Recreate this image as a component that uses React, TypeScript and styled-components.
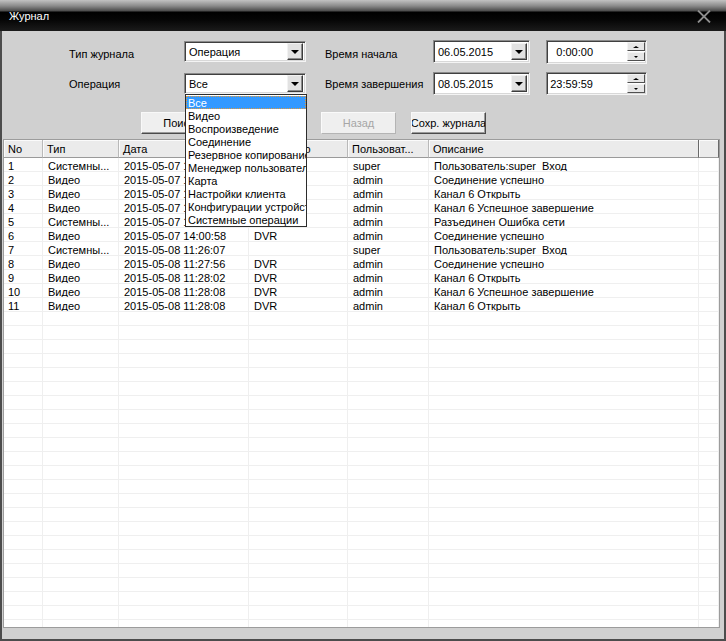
import styled, { createGlobalStyle } from "styled-components";

const GlobalStyle = createGlobalStyle`
  html, body {
    margin: 0;
    padding: 0;
    background: #d0d0d0;
  }
  body {
    font-family: "Liberation Sans", Arial, sans-serif;
    font-size: 11px;
    color: #000;
  }
  * {
    box-sizing: border-box;
  }
`;

const Window = styled.div`
  display: flex;
  flex-direction: column;
  width: 726px;
  height: 641px;
  overflow: hidden;
`;

const TitleBar = styled.div`
  display: flex;
  align-items: center;
  justify-content: space-between;
  flex: none;
  height: 31px;
  padding: 1px 15px 0 9px;
  color: #fff;
  background: linear-gradient(
    to bottom,
    #c2c2c2 0px,
    #8a8a8a 6px,
    #4a4a4a 11px,
    #000 12px,
    #060606 20px,
    #1b1b1b 31px
  );
`;

const Body = styled.div`
  display: flex;
  flex-direction: column;
  flex: 1;
  min-height: 0;
  padding: 9px 4px 11px 1px;
  background: #d0d0d0;
  border: 2px solid #4c4c4c;
  border-top: none;
`;

const FormRow = styled.div<{ $top?: number }>`
  display: flex;
  align-items: center;
  height: 23px;
  margin-top: ${(p) => p.$top ?? 0}px;
  padding-left: 66px;
`;

const Label = styled.div<{ $w: number; $gap?: number; $drop?: number }>`
  width: ${(p) => p.$w}px;
  margin-left: ${(p) => p.$gap ?? 0}px;
  padding-top: ${(p) => p.$drop ?? 0}px;
  white-space: nowrap;
`;

const Field = styled.div<{ $w: number; $h: number; $gap?: number; $pad?: number }>`
  position: relative;
  display: flex;
  align-items: center;
  width: ${(p) => p.$w}px;
  height: ${(p) => p.$h}px;
  margin-left: ${(p) => p.$gap ?? 0}px;
  padding-left: ${(p) => p.$pad ?? 3}px;
  background: #fff;
  border: 1px solid;
  border-color: #8a8a8a #f4f4f4 #f4f4f4 #8a8a8a;
  box-shadow: inset 1px 1px #404040, inset -1px -1px #d8d8d8;
  white-space: nowrap;
`;

const FieldText = styled.span`
  flex: 1;
  padding-left: 1px;
`;

const TimeText = styled.span`
  width: 45px;
  margin-right: auto;
  text-align: right;
`;

const ArrowButton = styled.div`
  display: flex;
  align-items: center;
  justify-content: center;
  width: 16px;
  height: 17px;
  margin-right: 2px;
  background: #e2e2e2;
  border: 1px solid;
  border-color: #f2f2f2 #3c3c3c #3c3c3c #f2f2f2;
  box-shadow: inset -1px -1px #8c8c8c;
`;

const Triangle = styled.span<{ $up?: boolean; $size?: number }>`
  width: 0;
  height: 0;
  border-left: ${(p) => p.$size ?? 4}px solid transparent;
  border-right: ${(p) => p.$size ?? 4}px solid transparent;
  ${(p) =>
    p.$up
      ? `border-bottom: ${(p.$size ?? 4) - 1}px solid #000;`
      : `border-top: ${p.$size ?? 4}px solid #000;`}
`;

const Spin = styled.div`
  display: flex;
  flex-direction: column;
  gap: 1px;
  margin-right: 1px;
`;

const SpinButton = styled.div`
  display: flex;
  align-items: center;
  justify-content: center;
  width: 18px;
  height: 9px;
  background: #e6e6e6;
  border: 1px solid;
  border-color: #f4f4f4 #505050 #505050 #f4f4f4;
`;

const DropList = styled.div`
  position: absolute;
  top: calc(100% + 1px);
  left: 0;
  z-index: 10;
  width: 122px;
  padding-top: 1px;
  background: #fff;
  border: 1px solid #2c2c2c;
  overflow: hidden;
`;

const DropItem = styled.div<{ $active?: boolean }>`
  height: 13px;
  line-height: 14px;
  padding-left: 2px;
  white-space: nowrap;
  color: ${(p) => (p.$active ? "#fff" : "#000")};
  background: ${(p) => (p.$active ? "#3399ff" : "transparent")};
  outline: ${(p) => (p.$active ? "1px dotted #e39a3a" : "none")};
  outline-offset: -1px;
`;

const ButtonRow = styled.div`
  display: flex;
  gap: 15px;
  margin-top: 17px;
  padding-left: 138px;
`;

const Button = styled.div<{ $disabled?: boolean }>`
  display: flex;
  align-items: center;
  justify-content: center;
  width: 75px;
  height: 22px;
  overflow: hidden;
  white-space: nowrap;
  color: ${(p) => (p.$disabled ? "#a6a6a6" : "#000")};
  background: #efefef;
  border: 1px solid;
  border-color: ${(p) =>
    p.$disabled ? "#fafafa #b4b4b4 #b4b4b4 #fafafa" : "#f8f8f8 #4a4a4a #4a4a4a #f8f8f8"};
  box-shadow: ${(p) => (p.$disabled ? "none" : "inset -1px -1px #9a9a9a")};
`;

const Table = styled.div`
  display: grid;
  grid-template-columns: 39px 76px 130px 99px 81px 270px 1fr;
  grid-template-rows: 18px;
  grid-auto-rows: 14px;
  align-content: start;
  flex: 1;
  min-height: 0;
  margin-top: 5px;
  overflow: hidden;
  background: #fff;
  border: 1px solid #9c9c9c;
`;

const HeadCell = styled.div<{ $dark?: boolean }>`
  height: 18px;
  line-height: 18px;
  padding-left: 4px;
  overflow: hidden;
  white-space: nowrap;
  background: #ebebeb;
  border-right: 1px solid ${(p) => (p.$dark ? "#6a6a6a" : "#b9b9b9")};
  border-bottom: 1px solid #9a9a9a;
  box-shadow: inset 1px 1px #fbfbfb;
`;

const Cell = styled.div<{ $pad?: number }>`
  height: 14px;
  line-height: 16px;
  padding-left: ${(p) => p.$pad ?? 5}px;
  overflow: hidden;
  white-space: nowrap;
  border-right: 1px solid #efefef;
  border-bottom: 1px solid #efefef;
`;

const ops = [
  "Все",
  "Видео",
  "Воспроизведение",
  "Соединение",
  "Резервное копирование",
  "Менеджер пользователей",
  "Карта",
  "Настройки клиента",
  "Конфигурации устройств",
  "Системные операции",
];

const headers = ["No", "Тип", "Дата", "Устройство", "Пользоват...", "Описание", ""];

const rows: string[][] = [
  ["1", "Системны...", "2015-05-07 13:52:10", "", "super", "Пользователь:super\u00a0 Вход"],
  ["2", "Видео", "2015-05-07 13:52:31", "DVR", "admin", "Соединение успешно"],
  ["3", "Видео", "2015-05-07 13:52:35", "DVR", "admin", "Канал 6 Открыть"],
  ["4", "Видео", "2015-05-07 13:58:12", "DVR", "admin", "Канал 6 Успешное завершение"],
  ["5", "Системны...", "2015-05-07 14:00:41", "", "admin", "Разъединен Ошибка сети"],
  ["6", "Видео", "2015-05-07 14:00:58", "DVR", "admin", "Соединение успешно"],
  ["7", "Системны...", "2015-05-08 11:26:07", "", "super", "Пользователь:super\u00a0 Вход"],
  ["8", "Видео", "2015-05-08 11:27:56", "DVR", "admin", "Соединение успешно"],
  ["9", "Видео", "2015-05-08 11:28:02", "DVR", "admin", "Канал 6 Открыть"],
  ["10", "Видео", "2015-05-08 11:28:08", "DVR", "admin", "Канал 6 Успешное завершение"],
  ["11", "Видео", "2015-05-08 11:28:08", "DVR", "admin", "Канал 6 Открыть"],
];

const TOTAL_ROWS = 34;

function CloseIcon() {
  return (
    <svg width="14" height="13" viewBox="0 0 14 13">
      <path d="M1 0.5 L13 12.5 M13 0.5 L1 12.5" stroke="#8e8e8e" strokeWidth="1.8" />
    </svg>
  );
}

function DropArrow() {
  return (
    <ArrowButton>
      <Triangle />
    </ArrowButton>
  );
}

function Spinner() {
  return (
    <Spin>
      <SpinButton>
        <Triangle $up $size={3} />
      </SpinButton>
      <SpinButton>
        <Triangle $size={2} />
      </SpinButton>
    </Spin>
  );
}

export default function App() {
  const filled = [...rows];
  while (filled.length < TOTAL_ROWS) filled.push(["", "", "", "", "", "", ""]);

  return (
    <>
      <GlobalStyle />
      <Window>
        <TitleBar>
          <span>Журнал</span>
          <CloseIcon />
        </TitleBar>
        <Body>
          <FormRow>
            <Label $w={115} $drop={4}>Тип журнала</Label>
            <Field $w={122} $h={21}>
              <FieldText>Операция</FieldText>
              <DropArrow />
            </Field>
            <Label $w={108} $gap={19} $drop={4}>Время начала</Label>
            <Field $w={97} $h={23}>
              <FieldText>06.05.2015</FieldText>
              <DropArrow />
            </Field>
            <Field $w={101} $h={24} $gap={16} $pad={1}>
              <TimeText>0:00:00</TimeText>
              <Spinner />
            </Field>
          </FormRow>
          <FormRow $top={9}>
            <Label $w={115}>Операция</Label>
            <Field $w={122} $h={21}>
              <FieldText>Все</FieldText>
              <DropArrow />
              <DropList>
                {ops.map((o, i) => (
                  <DropItem key={o} $active={i === 0}>
                    {o}
                  </DropItem>
                ))}
              </DropList>
            </Field>
            <Label $w={108} $gap={19}>Время завершения</Label>
            <Field $w={97} $h={23}>
              <FieldText>08.05.2015</FieldText>
              <DropArrow />
            </Field>
            <Field $w={101} $h={23} $gap={16} $pad={1}>
              <TimeText>23:59:59</TimeText>
              <Spinner />
            </Field>
          </FormRow>
          <ButtonRow>
            <Button>Поиск</Button>
            <Button>Далее</Button>
            <Button $disabled>Назад</Button>
            <Button>Сохр. журнала</Button>
          </ButtonRow>
          <Table>
            {headers.map((h, i) => (
              <HeadCell key={i} $dark={i >= 5}>
                {h}
              </HeadCell>
            ))}
            {filled.map((r, ri) =>
              [0, 1, 2, 3, 4, 5, 6].map((ci) => (
                <Cell key={ri + "-" + ci} $pad={ci === 0 ? 4 : 5}>
                  {r[ci] ?? ""}
                </Cell>
              ))
            )}
          </Table>
        </Body>
      </Window>
    </>
  );
}
